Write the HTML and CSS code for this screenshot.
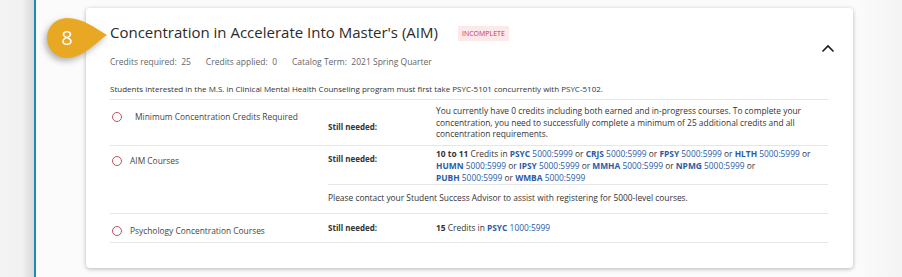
FILE: index.html
```html
<!DOCTYPE html>
<html lang="en">

<head>
    <meta charset="UTF-8">
    <meta name="viewport" content="width=device-width, initial-scale=1.0">
    <title>Concentration in Accelerate Into Master's (AIM)</title>
    <link rel="stylesheet" href="styles.css">
</head>

<body>
    <div class="gutter"></div>
    <div class="main">
        <div class="card">
            <svg class="marker" width="74" height="54" viewBox="0 0 74 54">
                <path d="M27 4 C43 4 55 14 67 21 C55 29 43 44 27 44 A20 20 0 0 1 27 4 Z" fill="#e9a824"/>
                <text x="27" y="31" text-anchor="middle" class="marker-num">8</text>
            </svg>

            <div class="head">
                <div>
                    <div class="title-row">
                        <h2 class="title">Concentration in Accelerate Into Master's (AIM)</h2>
                        <span class="badge">INCOMPLETE</span>
                    </div>
                    <div class="meta">
                        <span>Credits required:&nbsp; 25</span>
                        <span>Credits applied:&nbsp; 0</span>
                        <span>Catalog Term:&nbsp; 2021 Spring Quarter</span>
                    </div>
                </div>
                <svg class="chevron" width="14" height="9" viewBox="0 0 14 9">
                    <path d="M1.5 7.5 L7 2 L12.5 7.5" fill="none" stroke="#1d1d1d" stroke-width="1.6"/>
                </svg>
            </div>

            <p class="note">Students interested in the M.S. in Clinical Mental Health Counseling program must first take PSYC-5101 concurrently with PSYC-5102.</p>

            <div class="reqs">
                <div class="req req-min">
                    <div class="req-name"><span class="dot"></span><span class="name-pad">Minimum Concentration Credits Required</span></div>
                    <div class="needed">Still needed:</div>
                    <div class="detail">You currently have 0 credits including both earned and in-progress courses. To complete your<br>concentration, you need to successfully complete a minimum of 25 additional credits and all<br>concentration requirements.</div>
                </div>

                <div class="req req-aim">
                    <div class="req-name"><span class="dot"></span><span>AIM Courses</span></div>
                    <div class="needed">Still needed:</div>
                    <div class="detail"><b>10 to 11</b> Credits in <a><b>PSYC</b> 5000:5999</a> or <a><b>CRJS</b> 5000:5999</a> or <a><b>FPSY</b> 5000:5999</a> or <a><b>HLTH</b> 5000:5999</a> or<br><a><b>HUMN</b> 5000:5999</a> or <a><b>IPSY</b> 5000:5999</a> or <a><b>MMHA</b> 5000:5999</a> or <a><b>NPMG</b> 5000:5999</a> or<br><a><b>PUBH</b> 5000:5999</a> or <a><b>WMBA</b> 5000:5999</a></div>
                    <div class="extra">Please contact your Student Success Advisor to assist with registering for 5000-level courses.</div>
                </div>

                <div class="req req-psy">
                    <div class="req-name"><span class="dot"></span><span>Psychology Concentration Courses</span></div>
                    <div class="needed">Still needed:</div>
                    <div class="detail"><b>15</b> Credits in <a><b>PSYC</b> 1000:5999</a></div>
                </div>
            </div>
        </div>
    </div>
</body>

</html>
```

FILE: styles.css
```css
body {
    margin: 0;
    padding: 0;
    display: flex;
    height: 277px;
    overflow: hidden;
    background-color: #fafafa;
    font-family: "Open Sans", "DejaVu Sans", sans-serif;
    color: #333;
}

.gutter {
    width: 34px;
    flex: none;
    background: linear-gradient(to right, #f3f3f3 0, #f1f1f1 22px, #d9d9d9 34px);
    border-right: 2px solid #1b8bb4;
}

.main {
    flex: 1;
    padding: 8px 0 0 50px;
    background: linear-gradient(to right, #fbfbfb 0, #fbfbfb 820px, #f4f4f4 100%);
}

.card {
    position: relative;
    width: 767px;
    height: 260px;
    box-sizing: border-box;
    padding: 14px 25px 0 24px;
    background: white;
    border-radius: 4px;
    box-shadow: 0 1px 4px rgba(0, 0, 0, 0.28);
}

.marker {
    position: absolute;
    left: -46px;
    top: 6px;
    filter: drop-shadow(-2px 3px 3px rgba(0, 0, 0, 0.3));
}

.marker-num {
    fill: white;
    font-family: "Open Sans", sans-serif;
    font-size: 20px;
}

.head {
    display: flex;
    justify-content: space-between;
    align-items: flex-start;
}

.title-row {
    display: flex;
    align-items: center;
    gap: 20px;
}

.title {
    margin: 0;
    font-size: 15px;
    font-weight: normal;
    color: #2b2b2b;
}

.badge {
    background-color: #fde8ea;
    color: #c4384a;
    font-size: 7px;
    padding: 3px 4px;
    margin-top: 2px;
}

.meta {
    display: flex;
    gap: 15px;
    margin-top: 14px;
    font-size: 8.5px;
    color: #666;
}

.chevron {
    margin-top: 22px;
    margin-right: -7px;
}

.note {
    margin: 16px 0 0 0;
    font-size: 8px;
    color: #333;
    padding-bottom: 5px;
    border-bottom: 1px solid #e6e6e6;
}

.req {
    display: grid;
    grid-template-columns: 218px 108px 1fr;
    border-bottom: 1px solid #e6e6e6;
    font-size: 8.4px;
    line-height: 12px;
}

.req-name {
    display: flex;
    align-items: center;
    gap: 8px;
    padding-left: 2px;
    color: #444;
}

.dot {
    width: 10px;
    height: 10px;
    flex: none;
    border: 1.4px solid #c1505e;
    border-radius: 50%;
    box-sizing: border-box;
}

.name-pad {
    padding-left: 5px;
}

.needed {
    font-size: 8px;
    font-weight: bold;
    color: #333;
}

.detail {
    color: #333;
    white-space: nowrap;
}

.detail a {
    color: #2a5ca8;
}

.req-min {
    padding: 5px 0 5px 0;
    line-height: 11.5px;
}

.req-min .req-name {
    align-self: start;
    padding-top: 6px;
}

.req-min .needed {
    padding-top: 16px;
}

.req-aim .req-name {
    grid-row: span 2;
    align-self: start;
    padding-top: 9px;
}

.req-aim .needed {
    padding-top: 7px;
}

.req-aim .detail {
    padding: 2px 0 0 0;
}

.req-aim .extra {
    grid-column: 2 / span 2;
    border-top: 1px solid #e6e6e6;
    padding: 7px 0 9px 0;
}

.req-psy {
    padding: 8px 0 5px 0;
}

.req-psy .req-name {
    padding-top: 3px;
}
```
